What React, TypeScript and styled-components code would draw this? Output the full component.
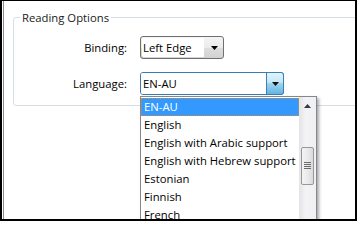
import React from 'react';
import styled, { createGlobalStyle } from 'styled-components';

const GlobalStyle = createGlobalStyle`
  html, body {
    margin: 0;
    padding: 0;
    background: #fff;
  }
  body {
    font-family: "Open Sans", "Liberation Sans", sans-serif;
    font-size: 11.3px;
    color: #000;
  }
`;

const LANGUAGES = [
  'EN-AU',
  'English',
  'English with Arabic support',
  'English with Hebrew support',
  'Estonian',
  'Finnish',
  'French',
];

const Frame = styled.div`
  width: 357px;
  height: 221px;
  box-sizing: border-box;
  border: 2px solid #000;
  border-top-width: 1px;
  background: #fff;
  overflow: hidden;
  display: flex;
`;

const Pane = styled.div`
  flex: 1;
  margin-left: 1px;
  border-left: 1px solid #8b8c94;
  padding: 9px 0 0 9px;
`;

const GroupBox = styled.fieldset`
  width: 400px;
  margin: 0;
  padding: 11px 0 10px 6px;
  border: 1px solid #d5dfe5;
  border-radius: 3px;
`;

const Legend = styled.legend`
  padding: 0 2px;
  line-height: 15px;
  color: #1a1a1a;
`;

const Form = styled.div`
  display: grid;
  grid-template-columns: 107px max-content;
  column-gap: 13px;
  row-gap: 13px;
  align-items: center;
`;

const Label = styled.span`
  justify-self: end;
  line-height: 15px;
`;

const ComboWrap = styled.div`
  position: relative;
`;

const Combo = styled.div<{ $width: number; $focused?: boolean }>`
  width: ${(p) => p.$width}px;
  height: 23px;
  box-sizing: border-box;
  display: flex;
  border: 1px solid ${(p) => (p.$focused ? '#3d7bad' : '#707070')};
  border-radius: 3px;
  background: ${(p) =>
    p.$focused ? '#fff' : 'linear-gradient(#f4f4f4, #ececec 50%, #dedede 50%, #d2d2d2)'};
`;

const Field = styled.div<{ $focused?: boolean }>`
  flex: 1;
  display: flex;
  align-items: center;
  margin: ${(p) => (p.$focused ? '0' : '1px')};
  padding-left: ${(p) => (p.$focused ? '2px' : '1px')};
  background: #fff;
  border-radius: 2px 0 0 2px;
`;

const ArrowBox = styled.div<{ $focused?: boolean }>`
  width: ${(p) => (p.$focused ? '16px' : '18px')};
  display: flex;
  align-items: center;
  justify-content: center;
  ${(p) =>
    p.$focused &&
    `
    margin: -1px -1px -1px 0;
    border: 1px solid #3c7fb1;
    border-radius: 0 3px 3px 0;
    background: linear-gradient(#e3f4fc, #c4e6f8 45%, #9fd4f1 50%, #62b4e2);
  `}
`;

const DropList = styled.div`
  position: absolute;
  left: 0;
  top: calc(100% + 1px);
  width: 177px;
  height: 140px;
  box-sizing: border-box;
  display: flex;
  border: 1px solid #828790;
  background: #fff;
  box-shadow: 2px 2px 3px rgba(0, 0, 0, 0.35);
  z-index: 2;
`;

const Items = styled.div`
  flex: 1;
  padding-top: 1px;
`;

const Item = styled.div<{ $selected?: boolean }>`
  height: 18px;
  box-sizing: border-box;
  line-height: 16px;
  padding-left: 2px;
  white-space: nowrap;
  border: 1px ${(p) => (p.$selected ? 'dotted #d08a3c' : 'solid transparent')};
  background: ${(p) => (p.$selected ? '#3399ff' : 'transparent')};
  color: ${(p) => (p.$selected ? '#fff' : '#000')};
`;

const ScrollBar = styled.div`
  width: 17px;
  display: flex;
  flex-direction: column;
  align-items: center;
  background: linear-gradient(to right, #e4e4e8, #f3f3f5 40%, #f0f0f2);
`;

const ScrollButton = styled.div`
  width: 17px;
  height: 17px;
  display: flex;
  align-items: center;
  justify-content: center;
`;

const Thumb = styled.div`
  margin-top: 33px;
  width: 13px;
  height: 38px;
  box-sizing: border-box;
  border: 1px solid #979797;
  border-radius: 2px;
  background: linear-gradient(to right, #f4f4f4, #eaeaea 50%, #dadada);
  display: flex;
  align-items: center;
  justify-content: center;
`;

const DownArrow = ({ color = '#000' }: { color?: string }) => (
  <svg width="7" height="4" viewBox="0 0 7 4">
    <polygon points="0,0 7,0 3.5,4" fill={color} />
  </svg>
);

const UpArrow = () => (
  <svg width="7" height="4" viewBox="0 0 7 4">
    <polygon points="0,4 7,4 3.5,0" fill="#3a3a3a" />
  </svg>
);

const Grip = () => (
  <svg width="7" height="8" viewBox="0 0 7 8">
    {[0, 2, 4, 6].map((y) => (
      <rect key={y} x="0" y={y} width="7" height="1" fill="#6b6b6b" />
    ))}
  </svg>
);

export default function App() {
  return (
    <>
      <GlobalStyle />
      <Frame>
        <Pane>
          <GroupBox>
            <Legend>Reading Options</Legend>
            <Form>
              <Label>Binding:</Label>
              <Combo $width={84}>
                <Field>Left Edge</Field>
                <ArrowBox>
                  <DownArrow />
                </ArrowBox>
              </Combo>

              <Label>Language:</Label>
              <ComboWrap>
                <Combo $width={144} $focused>
                  <Field $focused>EN-AU</Field>
                  <ArrowBox $focused>
                    <DownArrow color="#111" />
                  </ArrowBox>
                </Combo>
                <DropList>
                  <Items>
                    {LANGUAGES.map((lang, i) => (
                      <Item key={lang} $selected={i === 0}>
                        {lang}
                      </Item>
                    ))}
                  </Items>
                  <ScrollBar>
                    <ScrollButton>
                      <UpArrow />
                    </ScrollButton>
                    <Thumb>
                      <Grip />
                    </Thumb>
                  </ScrollBar>
                </DropList>
              </ComboWrap>
            </Form>
          </GroupBox>
        </Pane>
      </Frame>
    </>
  );
}
